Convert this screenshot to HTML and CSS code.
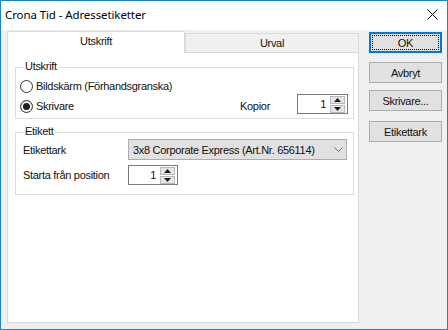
FILE: index.html
```html
<!DOCTYPE html>
<html lang="sv">
<head>
<meta charset="utf-8">
<title>Crona Tid - Adressetiketter</title>
<link rel="stylesheet" href="styles.css">
</head>
<body>
<div class="window">
  <div class="titlebar">
    <span class="title">Crona Tid - Adressetiketter</span>
    <svg class="close" width="11" height="11" viewBox="0 0 11 11"><path d="M0.5 0.5 L10.5 10.5 M10.5 0.5 L0.5 10.5" stroke="#000" stroke-width="1" fill="none"/></svg>
  </div>
  <div class="client">
    <div class="tabctl">
      <div class="tabstrip">
        <div class="tab active">Utskrift</div>
        <div class="tab">Urval</div>
      </div>
      <div class="panel">
        <div class="group g1">
          <div class="gtitle"><span>Utskrift</span></div>
          <div class="row radio-row r1"><span class="radio"></span><span class="rtext">Bildskärm (Förhandsgranska)</span></div>
          <div class="row radio-row r2">
            <span class="radio checked"></span><span class="rtext">Skrivare</span>
            <span class="kopior">Kopior</span>
            <div class="spin spin-kopior">
              <span class="val">1</span>
              <div class="spinbtns">
                <span class="sb"><svg width="7" height="4" viewBox="0 0 7 4"><path d="M3.5 0 L7 4 L0 4 Z" fill="#1a1a1a"/></svg></span>
                <span class="sb"><svg width="7" height="4" viewBox="0 0 7 4"><path d="M0 0 L7 0 L3.5 4 Z" fill="#1a1a1a"/></svg></span>
              </div>
            </div>
          </div>
        </div>
        <div class="group g2">
          <div class="gtitle"><span>Etikett</span></div>
          <div class="row erow e1">
            <span class="flabel">Etikettark</span>
            <div class="combo">
              <span class="ctext">3x8 Corporate Express (Art.Nr. 656114)</span>
              <svg class="chev" width="9" height="5" viewBox="0 0 9 5"><path d="M0.5 0.5 L4.5 4.5 L8.5 0.5" stroke="#6b6b6b" stroke-width="1" fill="none"/></svg>
            </div>
          </div>
          <div class="row erow e2">
            <span class="flabel">Starta från position</span>
            <div class="spin spin-pos">
              <span class="val">1</span>
              <div class="spinbtns">
                <span class="sb"><svg width="7" height="4" viewBox="0 0 7 4"><path d="M3.5 0 L7 4 L0 4 Z" fill="#1a1a1a"/></svg></span>
                <span class="sb"><svg width="7" height="4" viewBox="0 0 7 4"><path d="M0 0 L7 0 L3.5 4 Z" fill="#1a1a1a"/></svg></span>
              </div>
            </div>
          </div>
        </div>
      </div>
    </div>
    <div class="buttons">
      <div class="btn default"><span class="focus">OK</span></div>
      <div class="btn b-avbryt">Avbryt</div>
      <div class="btn b-skrivare">Skrivare...</div>
      <div class="btn b-etikett">Etikettark</div>
    </div>
  </div>
</div>
</body>
</html>
```
FILE: styles.css
```css
html, body {
  margin: 0;
  padding: 0;
  background: #fff;
}
body {
  font-family: "Liberation Sans", Arial, sans-serif;
  font-size: 11px;
  letter-spacing: -0.3px;
  color: #111;
}
.window {
  width: 448px;
  height: 330px;
  box-sizing: border-box;
  border: 1px solid #1883d7;
  display: flex;
  flex-direction: column;
  background: #f0f0f0;
  overflow: hidden;
}
.titlebar {
  height: 29px;
  flex: none;
  background: #fff;
  display: flex;
  align-items: center;
  padding-left: 4px;
}
.title {
  font-family: "Noto Sans", "Open Sans", sans-serif;
  font-size: 11.5px;
  letter-spacing: -0.1px;
  color: #000;
  margin-top: -2px;
}
.close {
  margin-left: auto;
  margin-right: 9px;
  margin-top: -2px;
}
.client {
  flex: 1;
  display: flex;
  align-items: flex-start;
}
.tabctl {
  margin-left: 6px;
  margin-top: 1px;
  width: 352px;
}
.tabstrip {
  display: flex;
  align-items: flex-end;
  height: 21px;
}
.tab {
  box-sizing: border-box;
  width: 174px;
  height: 19px;
  border: 1px solid #d9d9d9;
  border-bottom: none;
  background: #f0f0f0;
  text-align: center;
  line-height: 19px;
}
.tab.active {
  width: 178px;
  height: 22px;
  margin-bottom: -1px;
  background: #fff;
  position: relative;
  z-index: 1;
  line-height: 18px;
}
.panel {
  box-sizing: border-box;
  height: 271px;
  border: 1px solid #d9d9d9;
  background: #fff;
  padding: 14px 0 0 7px;
}
.group {
  box-sizing: border-box;
  width: 339px;
  border: 1px solid #dcdcdc;
}
.g1 { height: 52px; }
.g2 { height: 63px; margin-top: 13px; }
.gtitle {
  height: 13px;
  line-height: 13px;
  margin-top: -8px;
  padding-left: 7px;
}
.gtitle span {
  background: #fff;
  padding: 0 2px;
}
.row {
  display: flex;
  align-items: center;
}
.radio-row {
  height: 20px;
  padding-left: 4px;
}
.r1 { margin-top: 3px; }
.radio {
  box-sizing: border-box;
  width: 13px;
  height: 13px;
  border: 1px solid #333;
  border-radius: 50%;
  background: #fff;
  margin-right: 3px;
  flex: none;
}
.radio.checked {
  box-shadow: inset 0 0 0 2px #fff, inset 0 0 0 6px #1f1f1f;
}
.kopior {
  margin-left: auto;
}
.spin {
  box-sizing: border-box;
  height: 20px;
  border: 1px solid #7a7a7a;
  background: #fff;
  display: flex;
  align-items: center;
  justify-content: flex-end;
  padding-right: 2px;
}
.spin-kopior {
  width: 51px;
  margin-left: 27px;
  margin-right: 5px;
  align-self: flex-start;
  margin-top: -2px;
}
.spin .val {
  margin-right: 4px;
}
.spinbtns {
  display: flex;
  flex-direction: column;
  gap: 1px;
}
.sb {
  box-sizing: border-box;
  width: 15px;
  height: 8px;
  background: #e5e5e5;
  border: 1px solid #b9b9b9;
  display: flex;
  align-items: center;
  justify-content: center;
}
.erow {
  padding-left: 7px;
}
.e1 {
  height: 21px;
  margin-top: 1px;
}
.e2 {
  height: 20px;
  margin-top: 5px;
}
.flabel {
  width: 105px;
  flex: none;
}
.combo {
  box-sizing: border-box;
  width: 219px;
  height: 21px;
  border: 1px solid #adadad;
  background: #e1e1e1;
  display: flex;
  align-items: center;
  padding-left: 4px;
}
.chev {
  margin-left: auto;
  margin-right: 3px;
}
.spin-pos {
  width: 50px;
}
.buttons {
  margin-left: 10px;
  margin-top: 2px;
  width: 73px;
  display: flex;
  flex-direction: column;
}
.btn {
  box-sizing: border-box;
  height: 21px;
  border: 1px solid #adadad;
  background: #e1e1e1;
  display: flex;
  align-items: center;
  justify-content: center;
}
.btn.default {
  border: 1px solid #0078d7;
  box-shadow: inset 0 0 0 1px #0078d7;
  padding: 2px;
}
.focus {
  box-sizing: border-box;
  flex: 1;
  align-self: stretch;
  border: 1px dotted #000;
  display: flex;
  align-items: center;
  justify-content: center;
}
.b-avbryt { margin-top: 9px; }
.b-skrivare { margin-top: 7px; }
.b-etikett { margin-top: 10px; }
```
